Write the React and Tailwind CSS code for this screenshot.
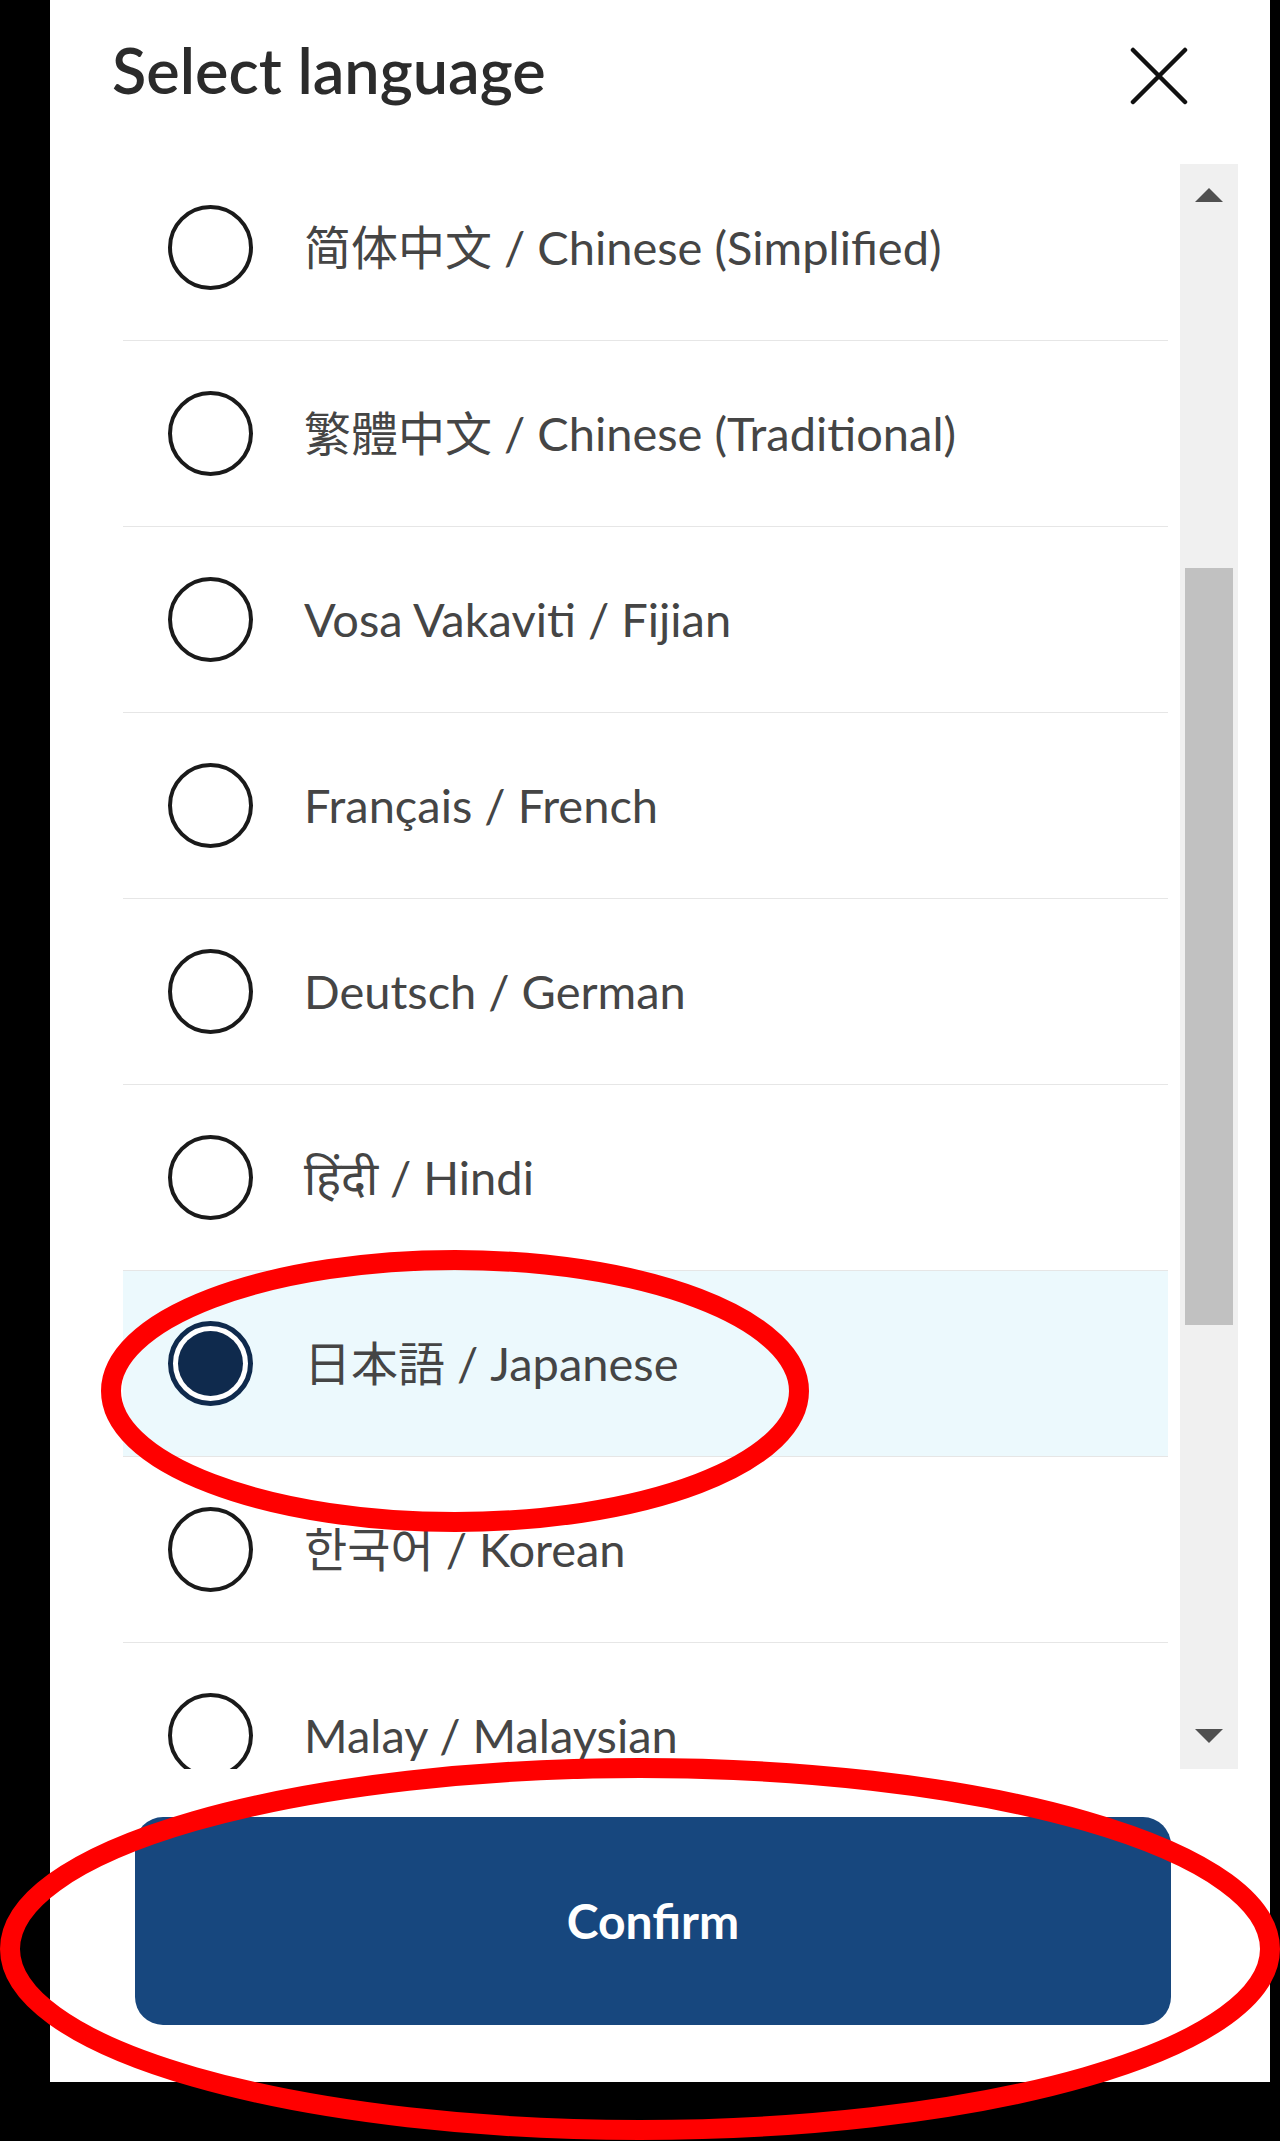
import React from 'react';

const languages = [
  { label: '简体中文 / Chinese (Simplified)', font: 'Lato, "Noto Sans CJK SC", sans-serif' },
  { label: '繁體中文 / Chinese (Traditional)', font: 'Lato, "Noto Sans CJK TC", sans-serif' },
  { label: 'Vosa Vakaviti / Fijian' },
  { label: 'Français / French' },
  { label: 'Deutsch / German' },
  { label: 'हिंदी / Hindi' },
  { label: '日本語 / Japanese', font: 'Lato, "Noto Sans CJK JP", sans-serif', selected: true },
  { label: '한국어 / Korean', font: 'Lato, "Noto Sans CJK KR", sans-serif' },
  { label: 'Malay / Malaysian' },
];

const Radio = ({ checked }) =>
  checked ? (
    <div className="ml-[45px] flex h-[85px] w-[85px] shrink-0 items-center justify-center rounded-full border-[5px] border-[#0f2a4d] bg-white">
      <div className="h-[65px] w-[65px] rounded-full bg-[#0f2a4d]" />
    </div>
  ) : (
    <div className="ml-[45px] h-[85px] w-[85px] shrink-0 rounded-full border-[4px] border-[#1a1a1a]" />
  );

const App = () => {
  return (
    <div className="relative h-[2141px] w-full overflow-hidden bg-black font-['Lato',sans-serif]">
      <div className="ml-[50px] flex h-[2082px] w-[1220px] flex-col bg-white">
        {/* header */}
        <div className="flex h-[164px] items-start justify-between pl-[62px] pr-[82px] pt-[38px]">
          <h1 className="text-[63px] font-semibold leading-none text-[#2b2b2b]">Select language</h1>
          <svg className="mt-[9px]" width="58" height="58" viewBox="0 0 58 58" fill="none">
            <path d="M3 3L55 55M55 3L3 55" stroke="#111" strokeWidth="4.5" strokeLinecap="round" />
          </svg>
        </div>

        {/* list + scrollbar */}
        <div className="flex h-[1605px] pl-[73px] pr-[32px]">
          <div className="w-[1045px] overflow-hidden">
            <div className="-mt-[9px]">
              {languages.map((lang) => (
                <div
                  key={lang.label}
                  className={`flex h-[186px] items-center border-b border-[#e6e6e6] ${lang.selected ? 'bg-[#ecf9fd]' : 'bg-white'}`}
                >
                  <Radio checked={lang.selected} />
                  <span
                    className="ml-[51px] text-[47px] leading-none text-[#454545]"
                    style={lang.font ? { fontFamily: lang.font } : undefined}
                  >
                    {lang.label}
                  </span>
                </div>
              ))}
            </div>
          </div>
          <div className="ml-[12px] flex w-[58px] flex-col bg-[#f0f0f0]">
            <div className="flex h-[62px] items-center justify-center">
              <svg width="28" height="14" viewBox="0 0 28 14">
                <path d="M14 0L28 14H0Z" fill="#505050" />
              </svg>
            </div>
            <div className="ml-[5px] mt-[342px] h-[757px] w-[48px] bg-[#c1c1c1]" />
            <div className="flex-1" />
            <div className="flex h-[66px] items-center justify-center">
              <svg width="28" height="14" viewBox="0 0 28 14">
                <path d="M0 0H28L14 14Z" fill="#505050" />
              </svg>
            </div>
          </div>
        </div>

        {/* confirm */}
        <button className="ml-[85px] mt-[48px] flex h-[208px] w-[1036px] items-center justify-center rounded-[28px] bg-[#17477e] text-[48px] font-bold text-white">
          Confirm
        </button>
      </div>

      {/* red annotation marks */}
      <svg className="pointer-events-none absolute inset-0" width="1280" height="2141" viewBox="0 0 1280 2141" fill="none">
        <ellipse cx="455" cy="1391" rx="344" ry="131" stroke="#ff0000" strokeWidth="20" />
        <ellipse cx="640" cy="1949" rx="630" ry="181" stroke="#ff0000" strokeWidth="20" />
      </svg>
    </div>
  );
};

export default App;
